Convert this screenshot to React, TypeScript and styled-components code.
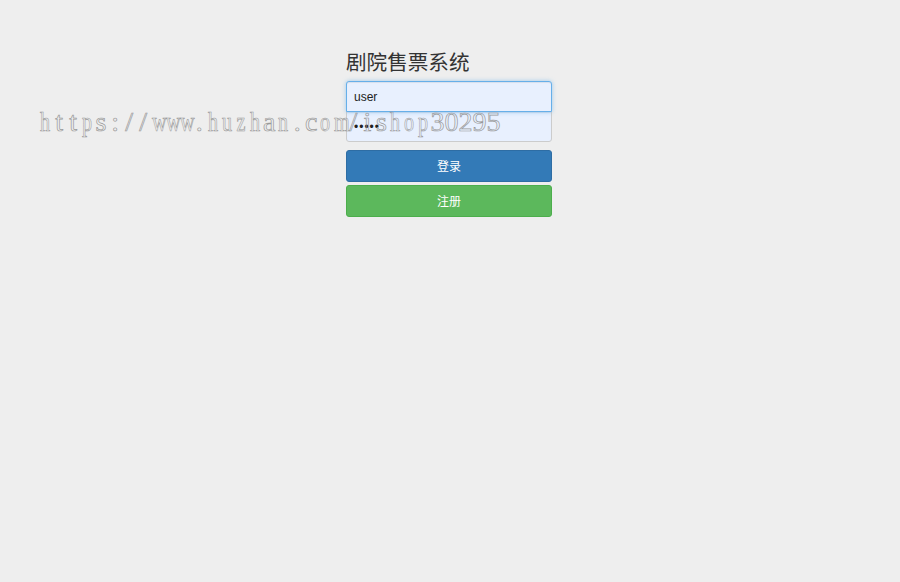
import React from "react";
import styled, { createGlobalStyle } from "styled-components";

const Global = createGlobalStyle`
  html, body { margin: 0; padding: 0; background: #eeeeee; }
  body { font-family: "Helvetica Neue", "Liberation Sans", Arial, "Noto Sans CJK SC", sans-serif; color: #333; }
  * { box-sizing: border-box; }
`;

const Page = styled.div`
  position: relative;
  width: 900px;
  height: 582px;
  display: flex;
  justify-content: center;
  padding-top: 48px;
`;

const Form = styled.form`
  width: 206px;
  margin-left: -2px;
  display: flex;
  flex-direction: column;
`;

const Title = styled.h2`
  margin: 0 0 6px 0;
  font-size: 20.6px;
  line-height: 27px;
  font-weight: 400;
  color: #333;
  font-family: "Noto Sans CJK SC", sans-serif;
`;

const Input = styled.input<{ $first?: boolean }>`
  display: block;
  width: 100%;
  height: 31px;
  padding: 6px 7px;
  font-size: 12px;
  font-family: "Liberation Sans", Arial, sans-serif;
  color: #222;
  background: #e8f0fe;
  border: 1px solid ${(p) => (p.$first ? "#66afe9" : "#cccccc")};
  border-radius: ${(p) => (p.$first ? "3px 3px 0 0" : "0 0 3px 3px")};
  margin-bottom: ${(p) => (p.$first ? "-1px" : "8px")};
  position: relative;
  z-index: ${(p) => (p.$first ? 1 : 0)};
  letter-spacing: ${(p) => (p.$first ? "0" : "1px")};
  box-shadow: ${(p) =>
    p.$first
      ? "inset 0 1px 1px rgba(0,0,0,.075), 0 0 4px rgba(102,175,233,.6)"
      : "inset 0 1px 1px rgba(0,0,0,.075)"};
  outline: none;
`;

const Button = styled.button<{ $variant: "primary" | "success" }>`
  display: block;
  width: 100%;
  height: 32px;
  margin-bottom: 3px;
  padding: 0 0 2px 0;
  font-size: 12px;
  color: #fff;
  font-family: "Noto Sans CJK SC", sans-serif;
  border-radius: 3px;
  cursor: pointer;
  background: ${(p) => (p.$variant === "primary" ? "#337ab7" : "#5cb85c")};
  border: 1px solid ${(p) => (p.$variant === "primary" ? "#2e6da4" : "#4cae4c")};
`;

const Watermark = styled.div`
  position: absolute;
  left: 38px;
  top: 106px;
  display: flex;
  font-family: "Liberation Serif", "Times New Roman", serif;
  font-size: 28px;
  line-height: 32px;
  color: transparent;
  -webkit-text-stroke: 0.7px #999999;
  white-space: nowrap;
  pointer-events: none;
  z-index: 5;
`;

const Char = styled.span<{ $narrow?: boolean }>`
  display: inline-block;
  width: 14.03px;
  text-align: center;
  transform: scaleX(${(p) => (p.$narrow ? 0.72 : 1)});
`;

const WM = "https://www.huzhan.com/ishop30295";

export default function App() {
  return (
    <>
      <Global />
      <Page>
        <Form onSubmit={(e) => e.preventDefault()}>
          <Title>剧院售票系统</Title>
          <Input $first type="text" defaultValue="user" />
          <Input type="password" defaultValue="....." />
          <Button $variant="primary" type="submit">登录</Button>
          <Button $variant="success" type="button">注册</Button>
        </Form>
        <Watermark>
          {WM.split("").map((c, i) => (
            <Char key={i} $narrow={"whumnpoz".includes(c)}>
              {c}
            </Char>
          ))}
        </Watermark>
      </Page>
    </>
  );
}
